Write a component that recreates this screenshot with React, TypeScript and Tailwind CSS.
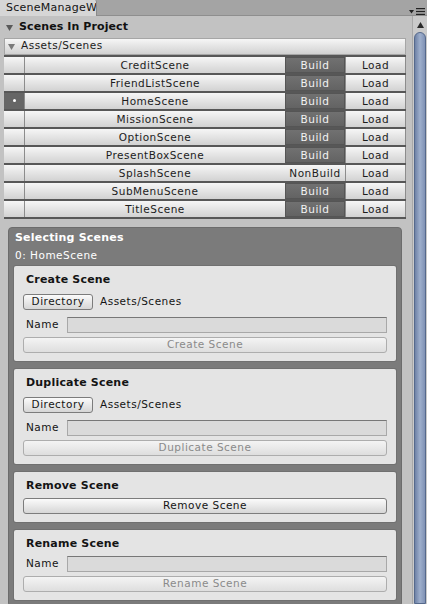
import type { ReactNode } from "react";

type SceneEntry = {
  name: string;
  inBuild: boolean;
};

const scenes: SceneEntry[] = [
  { name: "CreditScene", inBuild: true },
  { name: "FriendListScene", inBuild: true },
  { name: "HomeScene", inBuild: true },
  { name: "MissionScene", inBuild: true },
  { name: "OptionScene", inBuild: true },
  { name: "PresentBoxScene", inBuild: true },
  { name: "SplashScene", inBuild: false },
  { name: "SubMenuScene", inBuild: true },
  { name: "TitleScene", inBuild: true },
];

const selectedIndex = 2;

const lightCell = "bg-linear-to-b from-[#f6f6f6] to-[#d2d2d2]";
const darkCell = "bg-linear-to-b from-[#727272] to-[#626262] text-[#f2f2f2] shadow-[inset_0_0_0_1px_#555]";

function DownTriangle({ className }: { className?: string }) {
  return (
    <svg width="7" height="7" viewBox="0 0 7 7" className={className}>
      <polygon points="0,1 7,1 3.5,7" fill="currentColor" />
    </svg>
  );
}

function SceneRow({ scene, selected }: { scene: SceneEntry; selected: boolean }) {
  return (
    <div className="flex h-[16px] leading-none">
      <div
        className={`flex w-[21px] items-center justify-center border-r border-[#8c8c8c] ${
          selected ? "bg-[#666]" : lightCell
        }`}
      >
        {selected ? <span className="h-[3px] w-[3px] rounded-full bg-white" /> : null}
      </div>
      <div className={`flex flex-1 items-center justify-center pt-px text-[#1c1c1c] ${lightCell}`}>
        {scene.name}
      </div>
      <div
        className={`flex w-[60px] items-center justify-center pt-px ${
          scene.inBuild ? darkCell : `${lightCell} text-[#1c1c1c]`
        }`}
      >
        {scene.inBuild ? "Build" : "NonBuild"}
      </div>
      <div
        className={`flex w-[61px] items-center justify-center border-l border-r border-[#8c8c8c] pt-px text-[#1c1c1c] ${lightCell}`}
      >
        Load
      </div>
    </div>
  );
}

function EditorButton({
  children,
  disabled,
  className = "",
}: {
  children: ReactNode;
  disabled?: boolean;
  className?: string;
}) {
  return (
    <div
      className={`flex h-[16px] items-center justify-center rounded-[3px] border leading-none ${
        disabled
          ? "border-[#adadad] bg-linear-to-b from-[#f4f4f4] to-[#dedede] text-[#8a8a8a]"
          : "border-[#7c7c7c] bg-linear-to-b from-[#fbfbfb] to-[#d6d6d6] text-[#141414]"
      } ${className}`}
    >
      {children}
    </div>
  );
}

function DirectoryRow() {
  return (
    <div className="flex items-center">
      <EditorButton className="w-[70px]">Directory</EditorButton>
      <span className="ml-[7px] text-[#141414]">Assets/Scenes</span>
    </div>
  );
}

function NameField() {
  return (
    <div className="flex h-[16px] items-center">
      <span className="w-[44px] pl-[3px] text-[#141414]">Name</span>
      <div className="h-[16px] flex-1 border border-[#a8a8a8] border-t-[#777] bg-[#dadada]" />
    </div>
  );
}

function ToolPanel({ title, children }: { title: string; children: ReactNode }) {
  return (
    <div className="rounded-[2px] bg-[#e4e4e4] px-[9px] pb-[8px] pt-[7px] shadow-[0_0_0_1px_#707070]">
      <div className="flex h-[16px] items-center pl-[3px] text-[11px] font-bold tracking-[0.2px] text-[#141414]">
        {title}
      </div>
      {children}
    </div>
  );
}

export default function App() {
  return (
    <div className="flex h-[604px] w-[427px] flex-col overflow-hidden bg-[#c2c2c2] font-['DejaVu_Sans',sans-serif] text-[10.5px] tracking-[0.5px]">
      {/* window tab strip */}
      <div className="relative flex h-[16px] shrink-0 items-end border-b border-[#8e8e8e] bg-[#a4a4a4]">
        <div className="-mb-px flex h-[16px] w-[97px] items-center overflow-hidden whitespace-nowrap rounded-tr-[2px] border-r border-[#8a8a8a] bg-[#d6d6d6] pl-[6px] text-[11px] tracking-[0.25px] text-[#141414]">
          SceneManageW
        </div>
        <div className="absolute right-[2px] top-[8px] flex items-center gap-[2px] text-[#222]">
          <svg width="5" height="4" viewBox="0 0 5 4">
            <polygon points="0,0 5,0 2.5,3.5" fill="currentColor" />
          </svg>
          <svg width="9" height="7" viewBox="0 0 9 7">
            <rect x="0" y="0" width="9" height="1.2" fill="currentColor" />
            <rect x="0" y="2.9" width="9" height="1.2" fill="currentColor" />
            <rect x="0" y="5.8" width="9" height="1.2" fill="currentColor" />
          </svg>
        </div>
      </div>

      <div className="flex min-h-0 flex-1">
        <div className="flex min-w-0 flex-1 flex-col pl-[4px] pr-[6px]">
          {/* section header */}
          <div className="mt-[3px] flex h-[17px] items-center gap-[6px] pl-[2px] text-[11px] font-bold tracking-[0.1px] text-[#111]">
            <DownTriangle className="text-[#5a5a5a]" />
            <span>Scenes In Project</span>
          </div>

          {/* folder foldout */}
          <div
            className={`mt-[2px] flex h-[17px] shrink-0 items-center gap-[6px] border border-[#a6a6a6] pl-[3px] text-[#1c1c1c] ${lightCell}`}
          >
            <DownTriangle className="text-[#7a7a7a]" />
            <span>Assets/Scenes</span>
          </div>

          {/* scene table */}
          <div className="flex shrink-0 flex-col gap-[2px] bg-[#575757] py-[2px]">
            {scenes.map((scene, index) => (
              <SceneRow key={scene.name} scene={scene} selected={index === selectedIndex} />
            ))}
          </div>

          {/* selecting scenes box */}
          <div className="mx-[4px] mt-[8px] flex flex-col rounded-[4px] border border-[#6c6c6c] bg-[#7b7b7b] px-[5px] pt-[3px] pb-[6px]">
            <div className="flex h-[16px] items-center pl-px text-[11px] font-bold tracking-[0.2px] text-white">
              Selecting Scenes
            </div>
            <div className="mt-px flex h-[16px] items-center pl-px text-white">0: HomeScene</div>

            <div className="mt-[2px] flex flex-col gap-[8px]">
              <ToolPanel title="Create Scene">
                <div className="mt-[5px]">
                  <DirectoryRow />
                </div>
                <div className="mt-[7px]">
                  <NameField />
                </div>
                <EditorButton disabled className="mt-[4px]">
                  Create Scene
                </EditorButton>
              </ToolPanel>

              <ToolPanel title="Duplicate Scene">
                <div className="mt-[5px]">
                  <DirectoryRow />
                </div>
                <div className="mt-[7px]">
                  <NameField />
                </div>
                <EditorButton disabled className="mt-[4px]">
                  Duplicate Scene
                </EditorButton>
              </ToolPanel>

              <ToolPanel title="Remove Scene">
                <EditorButton className="mt-[3px]">Remove Scene</EditorButton>
              </ToolPanel>

              <ToolPanel title="Rename Scene">
                <div className="mt-[3px]">
                  <NameField />
                </div>
                <EditorButton disabled className="mt-[4px]">
                  Rename Scene
                </EditorButton>
              </ToolPanel>
            </div>
          </div>
        </div>

        {/* vertical scrollbar */}
        <div className="flex w-[15px] shrink-0 flex-col border-l border-[#a8a8a8] bg-[#cacaca]">
          <div className="flex h-[16px] items-center justify-center pt-[1px] text-[#2a2a2a]">
            <svg width="7" height="6" viewBox="0 0 7 6">
              <polygon points="3.5,0 7,6 0,6" fill="currentColor" />
            </svg>
          </div>
          <div className="mx-px flex-1 rounded-t-[7px] border border-[#55698c] bg-linear-to-r from-[#6f82a6] via-[#9eafcc] to-[#8092b5]" />
        </div>
      </div>
    </div>
  );
}
